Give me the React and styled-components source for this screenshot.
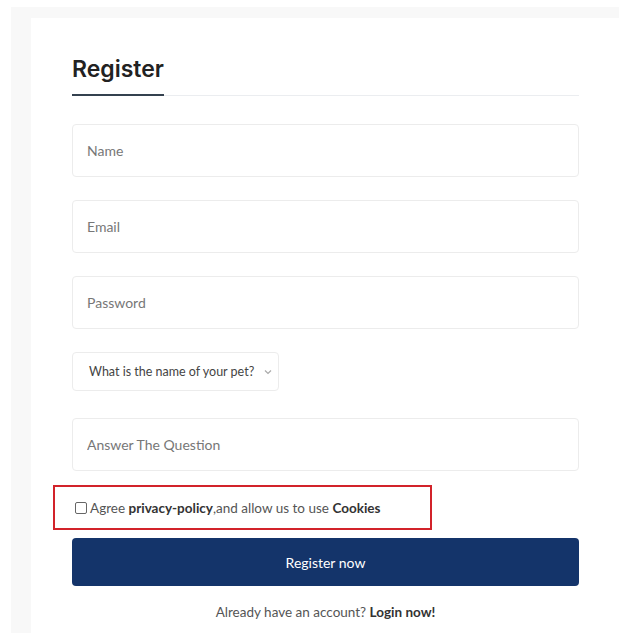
import React from 'react';
import styled, { createGlobalStyle } from 'styled-components';

const GlobalStyle = createGlobalStyle`
  html, body {
    margin: 0;
    padding: 0;
    background: #ffffff;
  }
  body {
    font-family: Lato, "Open Sans", sans-serif;
  }
  * {
    box-sizing: border-box;
  }
`;

const Page = styled.div`
  padding: 7px 0 0 11px;
  height: 633px;
  overflow: hidden;
`;

const Frame = styled.div`
  background: #f8f8f8;
  padding: 11px 0 0 20px;
  height: 100%;
`;

const Card = styled.div`
  background: #ffffff;
  height: 100%;
  padding: 36px 40px 0 41px;
`;

const Heading = styled.div`
  border-bottom: 1px solid #ebedf0;
  margin-bottom: 28px;
`;

const Title = styled.h2`
  display: inline-block;
  margin: 0 0 -1px 0;
  padding-bottom: 10px;
  font-family: Inter, "Open Sans", sans-serif;
  font-weight: 600;
  font-size: 23px;
  line-height: 30px;
  color: #222222;
  border-bottom: 2px solid #34414f;
`;

const Form = styled.form`
  display: flex;
  flex-direction: column;
`;

const Field = styled.input`
  height: 53px;
  width: 100%;
  margin-bottom: ${({ $gap }) => $gap ?? 23}px;
  padding: 0 14px;
  border: 1px solid #ececec;
  border-radius: 4px;
  background: #ffffff;
  font-family: Lato, sans-serif;
  font-size: 14px;
  color: #333;
  outline: none;
  &::placeholder {
    color: #777777;
  }
`;

const SelectBox = styled.div`
  display: flex;
  align-items: center;
  gap: 10px;
  width: 207px;
  height: 39px;
  margin-bottom: 27px;
  padding: 0 10px 0 16px;
  border: 1px solid #ececec;
  border-radius: 4px;
  font-size: 12.5px;
  white-space: nowrap;
  color: #444444;
`;

const Chevron = styled.span`
  margin-left: auto;
  display: flex;
  color: #aaaaaa;
`;

const Agree = styled.label`
  display: flex;
  align-items: center;
  gap: 3px;
  width: 379px;
  height: 45px;
  margin: 14px 0 8px -19px;
  padding-left: 20px;
  border: 2px solid #d2232a;
  font-size: 13.5px;
  color: #555555;
`;

const Check = styled.input`
  appearance: none;
  margin: 0;
  width: 12px;
  height: 12px;
  border: 1px solid #666666;
  border-radius: 2px;
  background: #fff;
`;

const Strong = styled.b`
  font-weight: 700;
  color: #333333;
`;

const Submit = styled.button`
  height: 48px;
  width: 100%;
  border: none;
  border-radius: 4px;
  background: #14346a;
  color: #ffffff;
  font-family: Lato, sans-serif;
  font-size: 14px;
`;

const Footer = styled.p`
  margin: 16px 0 0;
  text-align: center;
  font-size: 13.5px;
  line-height: 20px;
  color: #555555;
`;

const App = () => {
  return (
    <>
      <GlobalStyle />
      <Page>
        <Frame>
          <Card>
            <Heading>
              <Title>Register</Title>
            </Heading>
            <Form onSubmit={(e) => e.preventDefault()}>
              <Field placeholder="Name" />
              <Field placeholder="Email" />
              <Field placeholder="Password" type="password" />
              <SelectBox>
                What is the name of your pet?
                <Chevron>
                  <svg width="8" height="6" viewBox="0 0 8 6">
                    <path d="M1 1.5 L4 4.5 L7 1.5" fill="none" stroke="currentColor" strokeWidth="1.2" />
                  </svg>
                </Chevron>
              </SelectBox>
              <Field placeholder="Answer The Question" $gap={0} />
              <Agree>
                <Check type="checkbox" />
                <span>
                  Agree <Strong>privacy-policy</Strong>,and allow us to use <Strong>Cookies</Strong>
                </span>
              </Agree>
              <Submit type="submit">Register now</Submit>
              <Footer>
                Already have an account? <Strong>Login now!</Strong>
              </Footer>
            </Form>
          </Card>
        </Frame>
      </Page>
    </>
  );
};

export default App;
